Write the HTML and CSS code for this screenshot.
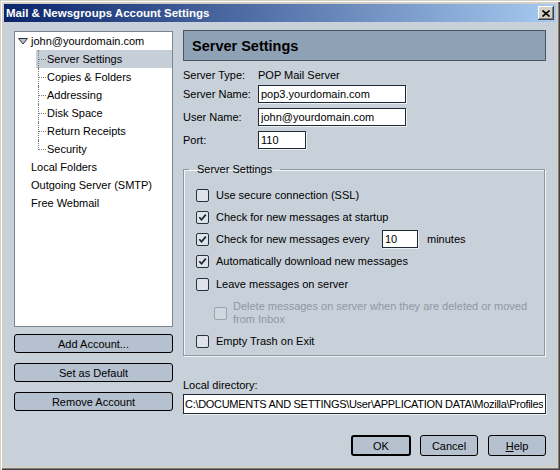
FILE: index.html
```html
<!DOCTYPE html>
<html>
<head>
<meta charset="utf-8">
<link rel="stylesheet" href="styles.css">
</head>
<body>
<div class="window">
  <div class="titlebar">
    <span class="title">Mail &amp; Newsgroups Account Settings</span>
    <span class="close"><svg width="8" height="7" viewBox="0 0 8 7"><path d="M0.5 0.5 L7.5 6.5 M7.5 0.5 L0.5 6.5" stroke="#000" stroke-width="1.6" fill="none"/></svg></span>
  </div>
  <div class="content">
    <div class="main">
      <div class="left">
        <div class="tree">
          <div class="row account"><svg class="tri" width="10" height="7" viewBox="0 0 10 7"><polygon points="0.5,0.5 9.5,0.5 5,6" fill="#b3bdc7" stroke="#2d3640" stroke-width="1"/></svg>john@yourdomain.com</div>
          <div class="child sel"><span class="twig"></span>Server Settings</div>
          <div class="child"><span class="twig"></span>Copies &amp; Folders</div>
          <div class="child"><span class="twig"></span>Addressing</div>
          <div class="child"><span class="twig"></span>Disk Space</div>
          <div class="child"><span class="twig"></span>Return Receipts</div>
          <div class="child last"><span class="twig"></span>Security</div>
          <div class="row">Local Folders</div>
          <div class="row">Outgoing Server (SMTP)</div>
          <div class="row">Free Webmail</div>
        </div>
        <button class="btn side first">Add Account...</button>
        <button class="btn side">Set as Default</button>
        <button class="btn side">Remove Account</button>
      </div>
      <div class="right">
        <div class="header">Server Settings</div>
        <div class="frow r1"><span class="lbl">Server Type:</span><span>POP Mail Server</span></div>
        <div class="frow r2"><span class="lbl">Server Name:</span><input class="field wide" type="text" value="pop3.yourdomain.com"></div>
        <div class="frow r3"><span class="lbl">User Name:</span><input class="field wide" type="text" value="john@yourdomain.com"></div>
        <div class="frow r3"><span class="lbl">Port:</span><input class="field port" type="text" value="110"></div>
        <fieldset class="group">
          <legend>Server Settings</legend>
          <div class="cbrow"><span class="cb"></span><span class="cbl">Use secure connection (SSL)</span></div>
          <div class="cbrow"><span class="cb"><svg width="9" height="9" viewBox="0 0 9 9"><path d="M1.3 4.3 L3.5 6.8 L7.8 1.6" stroke="#1c242c" stroke-width="1.7" fill="none"/></svg></span><span class="cbl">Check for new messages at startup</span></div>
          <div class="cbrow"><span class="cb"><svg width="9" height="9" viewBox="0 0 9 9"><path d="M1.3 4.3 L3.5 6.8 L7.8 1.6" stroke="#1c242c" stroke-width="1.7" fill="none"/></svg></span><span class="cbl every">Check for new messages every</span><input class="field mins" type="text" value="10"><span class="unit">minutes</span></div>
          <div class="cbrow tall"><span class="cb"><svg width="9" height="9" viewBox="0 0 9 9"><path d="M1.3 4.3 L3.5 6.8 L7.8 1.6" stroke="#1c242c" stroke-width="1.7" fill="none"/></svg></span><span class="cbl">Automatically download new messages</span></div>
          <div class="cbrow tall"><span class="cb"></span><span class="cbl">Leave messages on server</span></div>
          <div class="cbrow sub"><span class="cb dis"></span><span class="cbl dis">Delete messages on server when they are deleted or moved<br>from Inbox</span></div>
          <div class="cbrow"><span class="cb"></span><span class="cbl">Empty Trash on Exit</span></div>
        </fieldset>
        <div class="ldlabel">Local directory:</div>
        <input class="field ldinput" type="text" value="C:\DOCUMENTS AND SETTINGS\User\APPLICATION DATA\Mozilla\Profiles\default\xyz.slt\Mail\pop3.yourdomain.com">
      </div>
    </div>
    <div class="footer">
      <button class="btn ok">OK</button>
      <button class="btn cancel">Cancel</button>
      <button class="btn help"><u>H</u>elp</button>
    </div>
  </div>
</div>
</body>
</html>
```
FILE: styles.css
```css
body {
  margin: 0;
}

.window {
  width: 560px;
  height: 470px;
  box-sizing: border-box;
  padding: 4px;
  background: #d4d0c8;
  box-shadow: inset 1px 1px 0 #d4d0c8, inset 2px 2px 0 #ffffff, inset -1px -1px 0 #404040, inset -2px -2px 0 #808080;
  display: flex;
  flex-direction: column;
  font-family: "Liberation Sans", Arial, sans-serif;
  font-size: 11px;
  color: #000;
}

.titlebar {
  height: 18px;
  flex: none;
  display: flex;
  align-items: center;
  justify-content: space-between;
  padding: 0 2px;
  background: linear-gradient(to right, #0a246a, #a6caf0);
  color: #fff;
  font-weight: bold;
  font-size: 11.5px;
}

.close {
  width: 16px;
  height: 14px;
  box-sizing: border-box;
  background: #d4d0c8;
  box-shadow: inset -1px -1px 0 #404040, inset 1px 1px 0 #ffffff, inset -2px -2px 0 #808080;
  display: flex;
  align-items: center;
  justify-content: center;
}

.content {
  flex: 1;
  background: #c8d0d9;
  padding: 8px 10px 9px;
  display: flex;
  flex-direction: column;
}

.main {
  display: flex;
  gap: 10px;
}

.left {
  width: 159px;
  margin-top: 1px;
  display: flex;
  flex-direction: column;
}

.tree {
  height: 296px;
  box-sizing: border-box;
  background: #fff;
  border: 1px solid #7b8590;
}

.row {
  height: 18px;
  display: flex;
  align-items: center;
  padding-left: 16px;
  white-space: nowrap;
}

.row.account {
  padding-left: 3px;
}

.tri {
  margin-right: 3px;
}

.child {
  height: 18px;
  margin-left: 21px;
  padding-left: 2px;
  display: flex;
  align-items: center;
  white-space: nowrap;
}

.child.sel {
  background: #c6ced8;
}

.twig {
  width: 8px;
  height: 18px;
  box-sizing: border-box;
  border-left: 1px dotted #7a7a7a;
  margin-right: 1px;
  align-self: flex-start;
  position: relative;
}

.twig::after {
  content: "";
  position: absolute;
  left: 0;
  top: 9px;
  width: 7px;
  border-top: 1px dotted #7a7a7a;
}

.child.last .twig {
  height: 10px;
}

.btn {
  height: 19px;
  box-sizing: border-box;
  border: 1px solid #000;
  border-radius: 3px;
  background: #b5c1ce;
  font-family: inherit;
  font-size: 11px;
  color: #000;
  padding: 0;
  display: flex;
  align-items: center;
  justify-content: center;
}

.btn.side {
  width: 159px;
  margin-top: 10px;
}

.btn.side.first {
  margin-top: 7px;
}

.right {
  width: 363px;
  display: flex;
  flex-direction: column;
}

.header {
  height: 31px;
  box-sizing: border-box;
  border: 1px solid #4a5560;
  background: #8fa1b4;
  font-size: 14.5px;
  font-weight: bold;
  padding-left: 8px;
  display: flex;
  align-items: center;
}

.frow {
  display: flex;
  align-items: center;
}

.frow.r1 {
  margin-top: 7px;
  height: 13px;
}

.frow.r2 {
  margin-top: 4px;
}

.frow.r3 {
  margin-top: 5px;
}

.lbl {
  width: 75px;
}

.field {
  height: 18px;
  box-sizing: border-box;
  border: 1px solid #1f2933;
  box-shadow: 1px 1px 0 #eef1f4;
  background: #fff;
  padding: 0 2px;
  margin: 0;
  font-family: inherit;
  font-size: 11px;
  color: #000;
  outline: none;
}

.field.wide {
  width: 148px;
}

.field.port {
  width: 48px;
}

.group {
  margin: 14px 1px 0 0;
  padding: 8px 0 3px 5px;
  border: 1px solid #8b97a3;
  box-shadow: 1px 1px 0 #f2f4f6, inset 1px 1px 0 #f2f4f6;
  min-width: 0;
}

.group legend {
  padding: 0 8px;
  line-height: 13px;
}

.cbrow {
  height: 22px;
  display: flex;
  align-items: center;
  padding-left: 7px;
  white-space: nowrap;
}

.cbrow.tall {
  height: 23px;
}

.cbrow.sub {
  height: 34px;
  padding-left: 25px;
}

.cb {
  width: 13px;
  height: 13px;
  flex: none;
  box-sizing: border-box;
  border: 1px solid #27323c;
  border-radius: 2px;
  background: #dde3e9;
  display: flex;
  align-items: center;
  justify-content: center;
}

.cb.dis {
  border-color: #98a3ae;
  background: #d0d7de;
}

.cbl {
  margin-left: 7px;
  line-height: 13px;
}

.cbl.dis {
  margin-left: 6px;
  color: #8e99a5;
}

.cbl.every {
  width: 166px;
}

.field.mins {
  width: 36px;
}

.unit {
  margin-left: 9px;
}

.ldlabel {
  margin-top: 23px;
  line-height: 13px;
}

.ldinput {
  margin-top: 2px;
  height: 20px;
  width: 363px;
  padding-left: 1px;
  letter-spacing: -0.3px;
}

.footer {
  margin-top: 21px;
  display: flex;
  justify-content: flex-end;
}

.btn.ok {
  width: 60px;
  height: 21px;
  border-width: 2px;
}

.btn.cancel {
  width: 58px;
  height: 21px;
  margin-left: 9px;
}

.btn.help {
  width: 58px;
  height: 21px;
  margin-left: 10px;
}
```
